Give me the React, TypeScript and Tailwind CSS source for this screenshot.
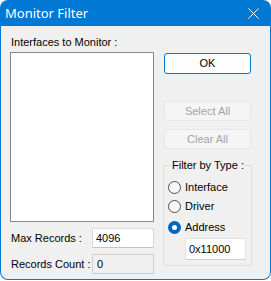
import React from "react";

function Radio({ label, checked }: { label: string; checked?: boolean }) {
  return (
    <div className="flex items-center h-[14px]">
      {checked ? (
        <span className="w-[13px] h-[13px] rounded-full bg-[#0067c0] flex items-center justify-center">
          <span className="w-[5px] h-[5px] rounded-full bg-white" />
        </span>
      ) : (
        <span className="w-[13px] h-[13px] rounded-full border border-[#4d4d4d] bg-[#f8f8f8]" />
      )}
      <span className="ml-[4px] text-[11px] leading-[14px] text-black">{label}</span>
    </div>
  );
}

export default function App() {
  return (
    <div className="w-[271px] h-[280px] bg-[#0078d4] rounded-[8px] px-[1px] pb-[1px] flex flex-col overflow-hidden font-['Liberation_Sans',Arial,sans-serif]">
      {/* title bar */}
      <div className="h-[26px] flex items-center justify-between pl-[4px] pr-[11px] shrink-0">
        <span className="text-white text-[13px] font-['Noto_Sans',sans-serif] leading-none">Monitor Filter</span>
        <svg width="11" height="11" viewBox="0 0 11 11" className="mt-[1px]">
          <path d="M0.5 0.5L10.5 10.5M10.5 0.5L0.5 10.5" stroke="white" strokeWidth="1" />
        </svg>
      </div>

      {/* body */}
      <div className="flex-1 bg-[#f0f0f0] rounded-b-[7px] flex pl-[9px]">
        {/* left column */}
        <div className="w-[144px] pt-[9px] flex flex-col">
          <div className="h-[14px] text-[11px] leading-[14px] pl-[1px] text-black">Interfaces to Monitor :</div>
          <div className="mt-[3px] h-[170px] bg-white border border-[#828790]" />
          <div className="mt-[6px] flex items-center h-[20px]">
            <span className="w-[82px] pl-[1px] text-[11px] leading-[14px] text-black">Max Records :</span>
            <div className="flex-1 h-[20px] bg-white border border-[#dadada] border-b-[#c4c4c4] flex items-center pl-[3px] text-[11px] text-black">4096</div>
          </div>
          <div className="mt-[6px] flex items-center h-[20px]">
            <span className="w-[82px] pl-[1px] text-[11px] leading-[14px] text-black">Records Count :</span>
            <div className="flex-1 h-[20px] bg-[#f0f0f0] border border-[#cfcfcf] flex items-center pl-[4px] text-[11px] text-black">0</div>
          </div>
        </div>

        {/* right column */}
        <div className="w-[89px] ml-[9px] pt-[27px] flex flex-col">
          <button className="mx-[1px] h-[21px] rounded-[3px] border border-[#0078d4] bg-[#fdfdfd] text-[11px] text-black flex items-center justify-center">OK</button>
          <button className="mt-[27px] mx-[1px] h-[20px] rounded-[3px] border border-[#e6e6e6] bg-[#f5f5f5] text-[11px] text-[#a3a3a3] flex items-center justify-center">Select All</button>
          <button className="mt-[8px] mx-[1px] h-[20px] rounded-[3px] border border-[#e6e6e6] bg-[#f5f5f5] text-[11px] text-[#a3a3a3] flex items-center justify-center">Clear All</button>

          <div className="relative mt-[16px] h-[101px] border border-[#dcdcdc] rounded-[2px] pl-[4px] pt-[14px]">
            <span className="absolute -top-[8px] left-[7px] px-[1px] bg-[#f0f0f0] text-[11px] leading-[14px] text-black">Filter by Type :</span>
            <Radio label="Interface" />
            <div className="mt-[5px]">
              <Radio label="Driver" />
            </div>
            <div className="mt-[7px]">
              <Radio label="Address" checked />
            </div>
            <div className="mt-[4px] ml-[17px] w-[61px] h-[22px] bg-white border border-[#e3e3e3] border-b-[#cdcdcd] flex items-center pl-[3px] text-[11px] text-black">0x11000</div>
          </div>
        </div>
      </div>
    </div>
  );
}
